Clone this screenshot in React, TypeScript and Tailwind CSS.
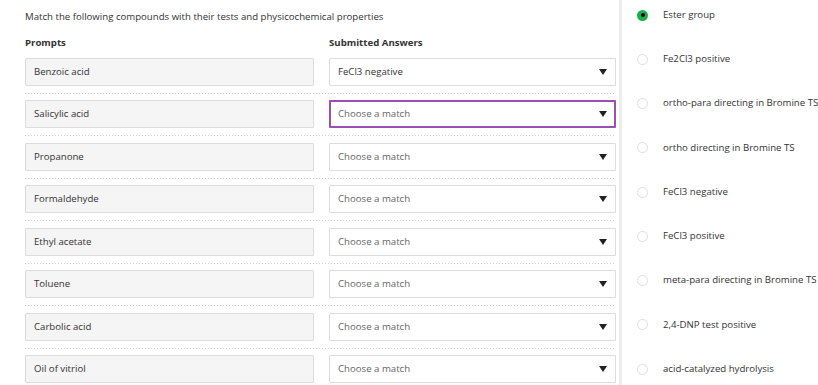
import React from "react";

const prompts = [
  "Benzoic acid",
  "Salicylic acid",
  "Propanone",
  "Formaldehyde",
  "Ethyl acetate",
  "Toluene",
  "Carbolic acid",
  "Oil of vitriol",
];

const options = [
  "Ester group",
  "Fe2Cl3 positive",
  "ortho-para directing in Bromine TS",
  "ortho directing in Bromine TS",
  "FeCl3 negative",
  "FeCl3 positive",
  "meta-para directing in Bromine TS",
  "2,4-DNP test positive",
  "acid-catalyzed hydrolysis",
];

function Caret() {
  return (
    <svg width="8" height="6" viewBox="0 0 8 6" className="shrink-0">
      <path d="M0 0 L8 0 L4 6 Z" fill="#222" />
    </svg>
  );
}

export default function App() {
  return (
    <div
      className="flex w-[818px] h-[385px] overflow-hidden bg-white text-[#333]"
      style={{ fontFamily: '"Open Sans", sans-serif' }}
    >
      <div className="w-[619px] shrink-0 pl-[25px] pr-[3px]">
        <div className="pt-[10px] h-[36px] text-[9.65px] leading-[14px]">
          Match the following compounds with their tests and physicochemical properties
        </div>
        <div className="flex h-[15px] text-[9.65px] font-bold leading-[14px]">
          <div className="w-[304px]">Prompts</div>
          <div>Submitted Answers</div>
        </div>
        <div className="flex flex-col">
          {prompts.map((p, i) => (
            <div key={p}>
              <div className="flex py-[6.75px] gap-[15px]">
                <div className="w-[289px] h-[28px] border border-[#dcdcdc] bg-[#f5f5f5] rounded-[1px] flex items-center px-[8px] text-[9.65px]">
                  {p}
                </div>
                <div
                  className={
                    "w-[287px] h-[28px] rounded-[1px] bg-white flex items-center justify-between text-[9.65px] " +
                    (i === 1
                      ? "border-2 border-[#9a4fb5] pl-[7px] pr-[7px]"
                      : "border border-[#dcdcdc] pl-[8px] pr-[8px]")
                  }
                >
                  <span className={i === 0 ? "text-[#333]" : "text-[#666]"}>
                    {i === 0 ? "FeCl3 negative" : "Choose a match"}
                  </span>
                  <Caret />
                </div>
              </div>
              <div className="w-[591px] h-px bg-[linear-gradient(to_right,#cfcfcf_1px,transparent_1px)] bg-[length:3px_1px]" />
            </div>
          ))}
        </div>
      </div>
      <div className="w-[3px] shrink-0 bg-[#ececec]" />
      <div className="flex-1 pl-[15px]">
        {options.map((o, i) => (
          <div
            key={o}
            className="flex items-center h-[44.25px] gap-[15px]"
            style={{ marginTop: i === 0 ? -7 : 0 }}
          >
            {i === 0 ? (
              <div className="w-[11px] h-[11px] rounded-full bg-[#18b24b] flex items-center justify-center shrink-0">
                <div className="w-[4px] h-[4px] rounded-full bg-black" />
              </div>
            ) : (
              <div className="w-[11px] h-[11px] rounded-full border border-[#dedede] bg-white shrink-0" />
            )}
            <span className="text-[9.65px] whitespace-nowrap">{o}</span>
          </div>
        ))}
      </div>
    </div>
  );
}
